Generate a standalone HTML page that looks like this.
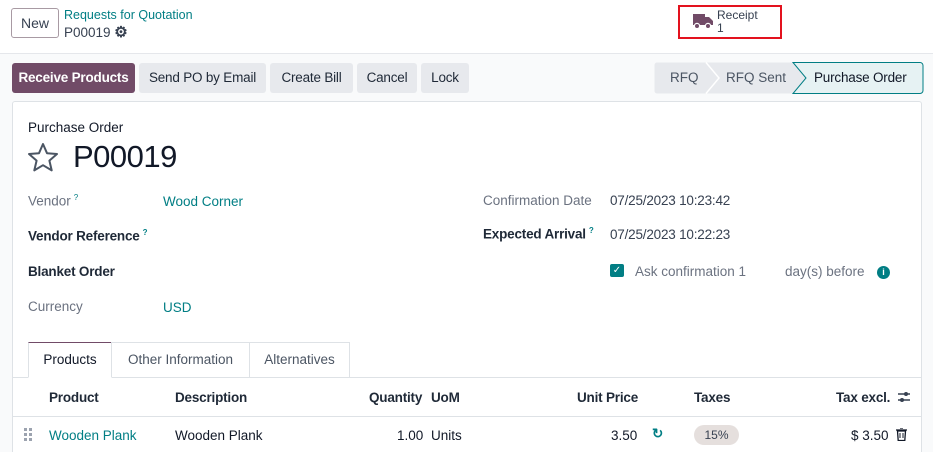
<!DOCTYPE html>
<html style="width:933px;height:452px;overflow:hidden"><head><meta charset="utf-8"><style>
*{box-sizing:border-box;margin:0;padding:0}
body{width:933px;height:452px;overflow:hidden;background:#f9fafb;font-family:"Liberation Sans",sans-serif;font-size:13.5px;color:#374151;position:relative}
.a{position:absolute;white-space:nowrap}
.top{position:absolute;left:0;top:0;width:933px;height:54px;background:#fff;border-bottom:1px solid #e5e7eb}
.btn{position:absolute;top:63px;height:30px;line-height:30px;border-radius:3px;background:#e7e9ed;color:#1f2937;text-align:center;font-size:13.5px;letter-spacing:-0.2px}
.card{position:absolute;left:12px;top:101px;width:910px;height:351px;background:#fff;border:1px solid #dee2e6;border-bottom:none;border-radius:3px 3px 0 0}
.teal{color:#017e84}
.lbl{color:#6b7280}
.b{color:#1f2937;font-weight:bold;letter-spacing:-0.2px}
sup{font-size:8px;color:#017e84;margin-left:3px}
</style></head><body>
<div class="top"></div>
<div class="a" style="left:11px;top:8px;width:48px;height:30px;border:1px solid #a89aa3;border-radius:3px;text-align:center;line-height:28px;color:#374151;font-size:14px">New</div>
<div class="a teal" style="left:64px;top:8px;font-size:12.5px">Requests for Quotation</div>
<div class="a" style="left:64px;top:23px;font-size:13.5px">P00019 <span style="font-size:15px;color:#374151;font-weight:bold">&#9881;</span></div>
<div class="a" style="left:678px;top:5px;width:104px;height:34px;border:2px solid #e3121e"></div>
<svg class="a" style="left:692px;top:12px" width="22" height="18" viewBox="0 0 22 18"><path d="M1 2h12v11H1z M13 5h4l4 4v4h-8z" fill="#714b67"/><circle cx="5" cy="14" r="2.6" fill="#714b67" stroke="#fff" stroke-width="1.2"/><circle cx="16" cy="14" r="2.6" fill="#714b67" stroke="#fff" stroke-width="1.2"/></svg>
<div class="a" style="left:717px;top:9px;font-size:12px;line-height:13px">Receipt<br>1</div>

<div class="btn" style="left:12px;width:123px;background:#714b67;color:#fff;font-weight:bold">Receive Products</div>
<div class="btn" style="left:139px;width:127px">Send PO by Email</div>
<div class="btn" style="left:270px;width:83px">Create Bill</div>
<div class="btn" style="left:357px;width:60px">Cancel</div>
<div class="btn" style="left:421px;width:48px">Lock</div>

<svg class="a" style="left:654px;top:62px" width="270" height="32" viewBox="0 0 270 32"><path d="M3 .5H139L152 16L139 31.5H3a2.5 2.5 0 0 1-2.5-2.5V3A2.5 2.5 0 0 1 3 .5z" fill="#e7e9ed"/><path d="M52 .5L65 16L52 31.5" stroke="#fff" stroke-width="1.5" fill="none"/><path d="M139 .5H266a3 3 0 0 1 3 3v25a3 3 0 0 1-3 3H139L152 16Z" fill="#e6f2f3" stroke="#017e84"/></svg>
<div class="a" style="left:670px;top:70px;color:#4b5563">RFQ</div>
<div class="a" style="left:726px;top:70px;color:#4b5563">RFQ Sent</div>
<div class="a" style="left:814px;top:70px;color:#111827;letter-spacing:-0.2px">Purchase Order</div>

<div class="card"></div>
<div class="a" style="left:28px;top:120px;color:#111827;font-size:13.5px">Purchase Order</div>
<svg class="a" style="left:27px;top:142px" width="32" height="30" viewBox="0 0 32 30"><path d="M16 2l4 9.2 10 .8-7.6 6.6 2.3 9.8L16 23.2 7.3 28.4l2.3-9.8L2 12l10-.8z" fill="none" stroke="#4b5563" stroke-width="2" stroke-linejoin="round"/></svg>
<div class="a" style="left:73px;top:139px;font-size:31px;color:#111827;letter-spacing:-0.5px">P00019</div>

<div class="a lbl" style="left:28px;top:193px">Vendor<sup>?</sup></div>
<div class="a teal" style="left:163px;top:194px">Wood Corner</div>
<div class="a b" style="left:28px;top:228px">Vendor Reference<sup>?</sup></div>
<div class="a b" style="left:28px;top:264px">Blanket Order</div>
<div class="a lbl" style="left:28px;top:299px">Currency</div>
<div class="a teal" style="left:163px;top:300px">USD</div>

<div class="a lbl" style="left:483px;top:193px">Confirmation Date</div>
<div class="a" style="left:610px;top:193px;letter-spacing:-0.2px">07/25/2023 10:23:42</div>
<div class="a b" style="left:483px;top:226px">Expected Arrival<sup>?</sup></div>
<div class="a" style="left:610px;top:227px;letter-spacing:-0.2px">07/25/2023 10:22:23</div>
<div class="a" style="left:610px;top:264px;width:14px;height:13px;background:#017e84;border-radius:2px;color:#fff;font-size:10px;line-height:13px;text-align:center">&#10003;</div>
<div class="a lbl" style="left:635px;top:264px">Ask confirmation 1</div>
<div class="a lbl" style="left:785px;top:264px">day(s) before</div>
<div class="a" style="left:877px;top:266px;width:13px;height:13px;border-radius:50%;background:#017e84;color:#fff;font-size:9px;font-weight:bold;line-height:13px;text-align:center">i</div>

<div class="a" style="left:13px;top:377px;width:908px;border-top:1px solid #dee2e6"></div>
<div class="a" style="left:28px;top:342px;width:84px;height:36px;background:#fff;border:1px solid #dee2e6;border-bottom:1px solid #fff;border-top:1px solid #714b67;text-align:center;line-height:34px;color:#111827">Products</div>
<div class="a" style="left:111px;top:342px;width:139px;height:35px;border:1px solid #dee2e6;border-bottom:none;text-align:center;line-height:34px;color:#4b5563">Other Information</div>
<div class="a" style="left:249px;top:342px;width:101px;height:35px;border:1px solid #dee2e6;border-bottom:none;text-align:center;line-height:34px;color:#4b5563">Alternatives</div>

<div class="a b" style="left:49px;top:390px">Product</div>
<div class="a b" style="left:175px;top:390px">Description</div>
<div class="a b" style="left:369px;top:390px">Quantity</div>
<div class="a b" style="left:431px;top:390px">UoM</div>
<div class="a b" style="left:577px;top:390px">Unit Price</div>
<div class="a b" style="left:694px;top:390px">Taxes</div>
<div class="a b" style="left:836px;top:390px">Tax excl.</div>
<svg class="a" style="left:897px;top:390px" width="14" height="14" viewBox="0 0 14 14"><path d="M1 4h12M1 10h12" stroke="#374151" stroke-width="1.5"/><circle cx="9" cy="4" r="2" fill="#374151"/><circle cx="5" cy="10" r="2" fill="#374151"/></svg>
<div class="a" style="left:13px;top:416px;width:908px;border-top:1px solid #dee2e6"></div>

<svg class="a" style="left:24px;top:428px" width="8" height="14" viewBox="0 0 8 14"><g fill="#9ca3af"><rect x="0" y="0" width="3" height="3"/><rect x="5" y="0" width="3" height="3"/><rect x="0" y="5" width="3" height="3"/><rect x="5" y="5" width="3" height="3"/><rect x="0" y="10" width="3" height="3"/><rect x="5" y="10" width="3" height="3"/></g></svg>
<div class="a teal" style="left:49px;top:428px">Wooden Plank</div>
<div class="a" style="left:175px;top:428px;color:#111827">Wooden Plank</div>
<div class="a" style="left:397px;top:428px;color:#111827">1.00</div>
<div class="a" style="left:431px;top:428px;color:#111827">Units</div>
<div class="a" style="left:611px;top:428px;color:#111827">3.50</div>
<div class="a teal" style="left:652px;top:426px;font-weight:bold">&#8635;</div>
<div class="a" style="left:694px;top:425px;width:45px;height:20px;border-radius:10px;background:#e5dfdd;text-align:center;line-height:20px;font-size:12px;color:#374151">15%</div>
<div class="a" style="left:851px;top:428px;color:#111827">$ 3.50</div>
<svg class="a" style="left:896px;top:428px" width="11" height="13" viewBox="0 0 11 13"><path d="M0 2h11M4 0h3M1.5 3h8l-.7 9.5H2.2z" stroke="#111827" stroke-width="1.3" fill="none"/><path d="M4 5v5M7 5v5" stroke="#111827" stroke-width="1"/></svg>
</body></html>
